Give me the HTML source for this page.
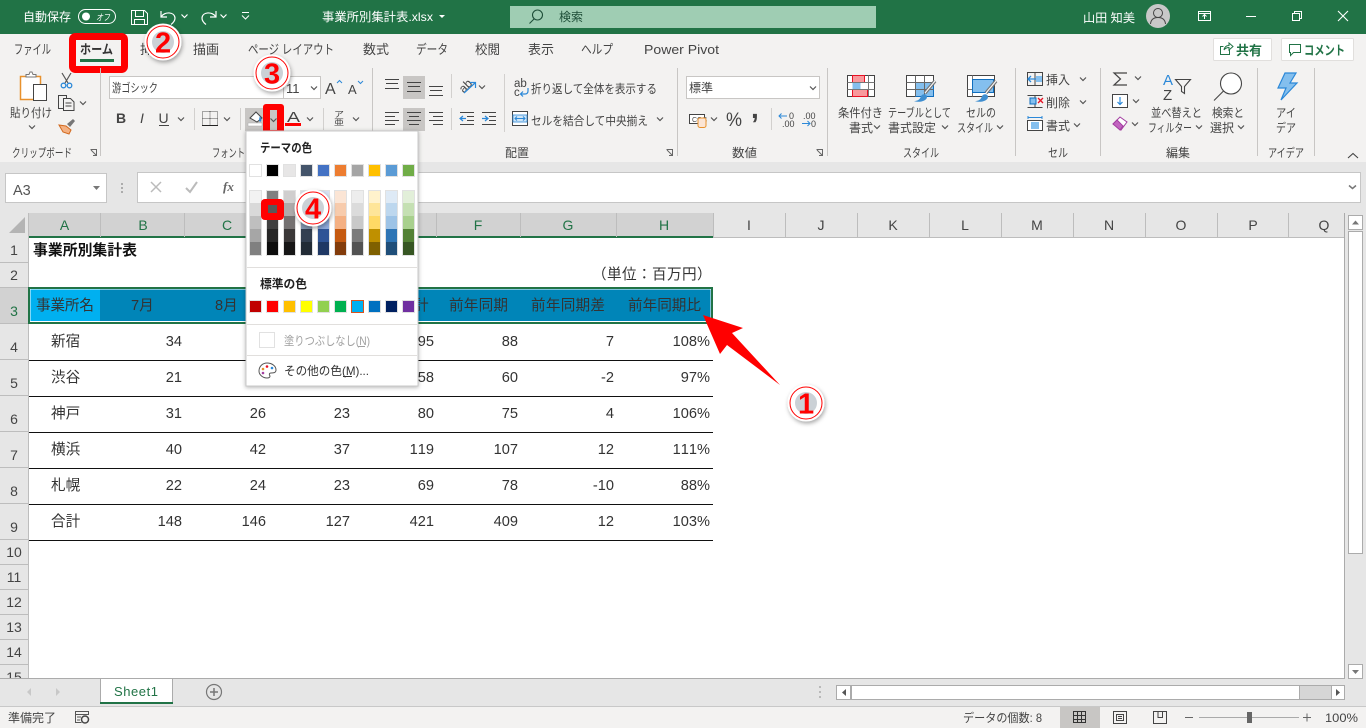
<!DOCTYPE html>
<html lang="ja"><head><meta charset="utf-8"><title>事業所別集計表.xlsx - Excel</title>
<style>
html,body{margin:0;padding:0;background:#fff;overflow:hidden}
svg{display:block}
text{font-family:"Liberation Sans","Noto Sans CJK JP",sans-serif;font-size:12px;fill:#444}
.w{fill:#fff}
.c{font-size:14.6px;fill:#333}
.hd{font-size:14px;fill:#444;text-anchor:middle}
.hs{font-size:14px;fill:#217346;text-anchor:middle}
.r{font-size:14.6px;fill:#333;text-anchor:end;font-kerning:none}
.n{font-family:"Liberation Sans",sans-serif;font-weight:bold;font-size:29px;fill:#f00;text-anchor:middle}
.tab{font-size:13px;fill:#444}
</style></head><body>
<svg width="1366" height="728" viewBox="0 0 1366 728" xmlns="http://www.w3.org/2000/svg">
<defs>
<path id="ch" d="M-3-1.5 0 1.5 3-1.5" fill="none" stroke="#555" stroke-width="1.2"/>
<path id="chw" d="M-3-1.5 0 1.5 3-1.5" fill="none" stroke="#fff" stroke-width="1.2"/>
<filter id="sh" x="-30%" y="-30%" width="160%" height="160%"><feDropShadow dx="1" dy="2" stdDeviation="2" flood-color="#000" flood-opacity=".35"/></filter>
<filter id="ms" x="-10%" y="-10%" width="120%" height="120%"><feDropShadow dx="0" dy="1" stdDeviation="2" flood-color="#000" flood-opacity=".3"/></filter>
<g id="badge"><circle r="18.5" fill="#fff" filter="url(#sh)"/><circle r="16" fill="#fff" stroke="#f00" stroke-width="1"/><circle r="11" fill="#a9b2ba" opacity=".6"/></g>
</defs>

<!-- base -->
<rect width="1366" height="728" fill="#e6e6e6"/>
<rect width="1366" height="34" fill="#217346"/>
<rect y="34" width="1366" height="128" fill="#f3f2f1"/>

<!-- title bar -->
<text class="w" x="23" y="21" textLength="48" lengthAdjust="spacingAndGlyphs">自動保存</text>
<rect x="78.500" y="9.500" width="37" height="14" rx="7" fill="none" stroke="#fff"/>
<circle cx="86" cy="16.500" r="4" fill="#fff"/>
<text class="w" x="96" y="20.500" style="font-size:9px;font-style:italic" textLength="14" lengthAdjust="spacingAndGlyphs">オフ</text>
<path d="M131.500 10.500h13l3 3v11h-16zM135.500 10.500v6h8v-6M134.500 24.500v-5h10v5" fill="none" stroke="#fff"/>
<path d="M161 11v6h6M161.500 16.500c3-5 13-5 13.500 1.500 0 3-2 5-4 6.500" fill="none" stroke="#fff" stroke-width="1.200"/>
<use href="#chw" x="184.500" y="16"/>
<path d="M216 11v6h-6M215.500 16.500c-3-5-13-5-13.500 1.500 0 3 2 5 4 6.500" fill="none" stroke="#fff" stroke-width="1.200"/>
<use href="#chw" x="223.500" y="16"/>
<path d="M242 12.500h7M242 15.500l3.500 3.500 3.500-3.500" fill="none" stroke="#fff"/>
<text class="w" x="322" y="21" textLength="111" lengthAdjust="spacingAndGlyphs">事業所別集計表.xlsx</text>
<path d="M439 15h6l-3 3z" fill="#fff"/>
<rect x="510" y="6" width="366" height="22" fill="#9fcdb3"/>
<circle cx="537.500" cy="15" r="5" fill="none" stroke="#1e4e38" stroke-width="1.100"/><path d="M534 19l-4.500 4.500" stroke="#1e4e38" stroke-width="1.100"/>
<text x="559" y="21" style="fill:#1e4e38" textLength="24" lengthAdjust="spacingAndGlyphs">検索</text>
<text class="w" x="1083" y="22" textLength="52" lengthAdjust="spacingAndGlyphs">山田 知美</text>
<circle cx="1158" cy="16" r="12" fill="#c8c8c8"/>
<circle cx="1158" cy="13" r="4.500" fill="none" stroke="#444"/><path d="M1150.500 24c.5-5 3.500-6.500 7.500-6.500s7 1.500 7.500 6.500" fill="none" stroke="#444"/>
<path d="M1198.500 11.500h12v9h-12zM1198.500 13.500h12M1204.500 19v-4M1202.500 16.500l2-2 2 2" fill="none" stroke="#fff"/>
<path d="M1246 16.500h10" stroke="#fff"/>
<path d="M1292.500 13.500h7v7h-7zM1294.500 13.500v-2h7v7h-2" fill="none" stroke="#fff"/>
<path d="M1338 11l10 10M1348 11l-10 10" stroke="#fff" stroke-width="1.100"/>

<!-- tabs -->
<text class="tab" x="14" y="54" textLength="37" lengthAdjust="spacingAndGlyphs">ファイル</text>
<text class="tab" x="140" y="54">挿入</text>
<text class="tab" x="193" y="54" textLength="26" lengthAdjust="spacingAndGlyphs">描画</text>
<text class="tab" x="248" y="54" textLength="86" lengthAdjust="spacingAndGlyphs">ページ レイアウト</text>
<text class="tab" x="363" y="54" textLength="26" lengthAdjust="spacingAndGlyphs">数式</text>
<text class="tab" x="416" y="54" textLength="32" lengthAdjust="spacingAndGlyphs">データ</text>
<text class="tab" x="475" y="54" textLength="25" lengthAdjust="spacingAndGlyphs">校閲</text>
<text class="tab" x="528" y="54" textLength="26" lengthAdjust="spacingAndGlyphs">表示</text>
<text class="tab" x="581" y="54" textLength="32" lengthAdjust="spacingAndGlyphs">ヘルプ</text>
<text class="tab" x="644" y="54" textLength="75" lengthAdjust="spacingAndGlyphs">Power Pivot</text>
<rect x="72.500" y="36.500" width="52" height="33" rx="3" fill="#f3f2f1" stroke="#f00" stroke-width="7"/>
<text class="tab" x="80" y="54" style="font-weight:bold;fill:#333" textLength="33" lengthAdjust="spacingAndGlyphs">ホーム</text>
<rect x="80" y="59" width="34" height="3" fill="#217346"/>

<!-- share / comment -->
<rect x="1213.500" y="38.500" width="58" height="22" rx="1" fill="#fff" stroke="#e1dfdd"/>
<path d="M1229.500 49.500v5h-9v-8h3M1224 50c.5-3 2.500-4.500 5-4.500V43l4 3.500-4 3.500v-2.500c-2 0-3.500.5-5 2.500z" fill="none" stroke="#217346"/>
<text x="1236" y="55" style="font-size:13px;font-weight:bold;fill:#217346">共有</text>
<rect x="1281.500" y="38.500" width="72" height="22" rx="1" fill="#fff" stroke="#e1dfdd"/>
<path d="M1289.500 44.500h11v8h-7l-3 3v-3h-1z" fill="none" stroke="#217346"/>
<text x="1304" y="55" style="font-size:13px;font-weight:bold;fill:#217346" textLength="41" lengthAdjust="spacingAndGlyphs">コメント</text>

<!-- ribbon group separators -->
<path d="M100.500 68v88M372.500 68v88M677.500 68v88M827.500 68v88M1015.500 68v88M1100.500 68v88M1257.500 68v88M1314.500 68v88" stroke="#c8c6c4"/>
<path d="M194.500 108v22M240.500 108v22M323.500 108v22M451.500 74v24M451.500 108v22M504.500 74v58M771.500 108v22" stroke="#d2d0ce"/>

<!-- clipboard -->
<rect x="20.500" y="76.500" width="20" height="23" fill="#fff" stroke="#e8912d" stroke-width="1.500"/>
<path d="M26 76.500v-2h3l1-2.500h2l1 2.500h3v2.500h-10z" fill="#fff" stroke="#777"/>
<rect x="33.500" y="84.500" width="13" height="16" fill="#fff" stroke="#444"/>
<text x="10" y="117" textLength="42" lengthAdjust="spacingAndGlyphs">貼り付け</text>
<use href="#ch" x="32" y="127"/>
<path d="M62 73l6 10M71 73l-6 10" stroke="#555" stroke-width="1.200"/><circle cx="63.500" cy="85.500" r="2.300" fill="none" stroke="#2b88d8" stroke-width="1.300"/><circle cx="69.500" cy="85.500" r="2.300" fill="none" stroke="#2b88d8" stroke-width="1.300"/>
<path d="M63 108.500h-4.500v-13h8v3M63.500 98.500h7l3.500 3.500v8.500h-10.500zM65.500 103h6M65.500 106h6" fill="none" stroke="#444"/>
<use href="#ch" x="83" y="103"/>
<path d="M59 125l7 1 5 4-2 4-6-2z" fill="#f4b183" stroke="#d2691e"/><path d="M67 124l6-5 2 2-5 6z" fill="#777"/>
<text x="12" y="157" textLength="60" lengthAdjust="spacingAndGlyphs">クリップボード</text>
<path d="M90.500 149.500h6v6M91 150l5 5M93 155.500h3.500v-3.500" fill="none" stroke="#666"/>

<!-- font -->
<rect x="109.500" y="76.500" width="174" height="22" fill="#fff" stroke="#c8c6c4"/>
<rect x="283.500" y="76.500" width="37" height="22" fill="#fff" stroke="#c8c6c4"/>
<text x="112" y="92" textLength="46" lengthAdjust="spacingAndGlyphs">游ゴシック</text>
<text x="286" y="93" style="font-size:13px">11</text>
<use href="#ch" x="314" y="88"/>
<text x="325" y="94" style="font-size:16px">A</text><path d="M337 83l2.500-2.500 2.500 2.500" fill="none" stroke="#2b88d8"/>
<text x="348" y="94" style="font-size:13px">A</text><path d="M358 81l2.500 2.500 2.500-2.500" fill="none" stroke="#2b88d8"/>
<text x="116" y="123" style="font-weight:bold;font-size:14px">B</text>
<text x="140" y="123" style="font-style:italic;font-size:14px">I</text>
<text x="158.500" y="123" style="font-size:14px">U</text><path d="M159 125.500h10" stroke="#444"/>
<use href="#ch" x="181" y="119"/>
<path d="M202.500 111.500h15v14h-15zM210 111.500v14M202.500 118.500h15" fill="none" stroke="#555" stroke-dasharray="1 1"/><path d="M202 125.500h16" stroke="#222"/>
<use href="#ch" x="227" y="119"/>
<rect x="245" y="108" width="18" height="23" fill="#c8c6c4"/>
<path d="M250 118l6-6 6 6-5 4z" fill="#fff" stroke="#444"/><path d="M260 116c1 2 2 3 1 5s-3 0-1-5z" fill="#2b88d8"/><rect x="248" y="123" width="14" height="3" fill="#fff" stroke="#aaa" stroke-width=".5"/>
<rect x="263" y="104" width="21" height="33" rx="3" fill="#f00"/>
<rect x="270" y="110" width="7" height="20" fill="#c8c6c4"/>
<use href="#ch" x="273.500" y="120"/>
<text x="287" y="122" style="font-size:15px" textLength="13" lengthAdjust="spacingAndGlyphs">A</text>
<rect x="285" y="123" width="16" height="3" fill="#f00"/>
<use href="#ch" x="310" y="119"/>
<text x="334" y="117" style="font-size:8px" textLength="10" lengthAdjust="spacingAndGlyphs">ア</text><text x="334" y="125" style="font-size:8px" textLength="10" lengthAdjust="spacingAndGlyphs">亜</text>
<use href="#ch" x="356" y="119"/>
<text x="212" y="157" textLength="33" lengthAdjust="spacingAndGlyphs">フォント</text>

<!-- alignment -->
<rect x="403" y="76" width="22" height="23" fill="#c8c6c4"/>
<rect x="403" y="108" width="22" height="23" fill="#c8c6c4"/>
<path d="M385 79.500h14M386 83.500h12M385 88.500h14M407 82.500h14M408 86.500h12M407 91.500h14M429 86.500h14M430 90.500h12M429 95.500h14" stroke="#444"/>
<path d="M385 112.500h14M385 116.500h10M385 120.500h14M385 124.500h10M407 112.500h14M409 116.500h10M407 120.500h14M409 124.500h10M429 112.500h14M433 116.500h10M429 120.500h14M433 124.500h10" stroke="#444"/>
<text x="458" y="90" transform="rotate(-45 465 85)" style="font-size:12px">ab</text>
<path d="M464 93l11-10M470 82.500h5.500v5.500" fill="none" stroke="#2b88d8" stroke-width="1.200"/>
<use href="#ch" x="482" y="87"/>
<path d="M460 112.500h14M467 116.500h7M467 120.500h7M460 124.500h14" stroke="#444"/>
<path d="M466 118.500h-6M463 116l-3 2.500 3 2.500" fill="none" stroke="#2b88d8" stroke-width="1.200"/>
<path d="M482 112.500h14M489 116.500h7M489 120.500h7M482 124.500h14" stroke="#444"/>
<path d="M482 118.500h6M485 116l3 2.500-3 2.500" fill="none" stroke="#2b88d8" stroke-width="1.200"/>
<text x="514" y="87" style="font-size:11.500px">ab</text><text x="514" y="96" style="font-size:11.500px">c</text>
<path d="M528 88v3c0 2-1 3-3 3h-4M523 91.500l-2.500 2.500 2.500 2.500" fill="none" stroke="#2b88d8" stroke-width="1.200"/>
<text x="531" y="93" textLength="126" lengthAdjust="spacingAndGlyphs">折り返して全体を表示する</text>
<rect x="512.500" y="111.500" width="15" height="14" fill="#fff" stroke="#444"/>
<rect x="513" y="115" width="14" height="7" fill="#cfe5f7" stroke="#2b88d8" stroke-width=".8"/>
<path d="M515 118.500h10M517 116.500l-2 2 2 2M523 116.500l2 2-2 2" fill="none" stroke="#2b88d8"/>
<text x="531" y="125" textLength="117" lengthAdjust="spacingAndGlyphs">セルを結合して中央揃え</text>
<use href="#ch" x="660" y="119"/>
<text x="505" y="157" textLength="24" lengthAdjust="spacingAndGlyphs">配置</text>
<path d="M666.500 149.500h6v6M667 150l5 5M669 155.500h3.500v-3.500" fill="none" stroke="#666"/>

<!-- number -->
<rect x="686.500" y="76.500" width="133" height="22" fill="#fff" stroke="#c8c6c4"/>
<text x="689" y="92">標準</text>
<use href="#ch" x="813" y="88"/>
<rect x="689.500" y="114.500" width="15" height="9" fill="#fff" stroke="#444"/>
<text x="692" y="122" style="font-size:7px">CCC</text>
<rect x="698" y="118" width="8" height="9.500" rx="2" fill="#fbe5d5" stroke="#e8912d"/>
<use href="#ch" x="714" y="119"/>
<text x="726" y="126" style="font-size:19px" textLength="16" lengthAdjust="spacingAndGlyphs">%</text>
<text x="751" y="118" style="font-size:28px;font-weight:bold">,</text>
<text x="789" y="119" style="font-size:9px">0</text><text x="782" y="127" style="font-size:9px">.00</text>
<path d="M787 116h-8M781.500 113.500l-2.500 2.500 2.500 2.500" fill="none" stroke="#2b88d8"/>
<text x="803" y="119" style="font-size:9px">.00</text><text x="811" y="127" style="font-size:9px">0</text>
<path d="M802 123.500h8M807.500 121l2.500 2.500-2.500 2.500" fill="none" stroke="#2b88d8"/>
<text x="732" y="157" textLength="25" lengthAdjust="spacingAndGlyphs">数値</text>
<path d="M816.500 149.500h6v6M817 150l5 5M819 155.500h3.500v-3.500" fill="none" stroke="#666"/>

<!-- styles -->
<rect x="847.500" y="75.500" width="27" height="21" fill="#fff" stroke="#444"/>
<rect x="852.500" y="75.500" width="12" height="7" fill="#f8999c" stroke="#e81123"/>
<rect x="852.500" y="82.500" width="8" height="7" fill="#84bfee"/>
<rect x="852.500" y="89.500" width="15" height="7" fill="#f8999c" stroke="#e81123"/>
<path d="M868.500 75.500v21M847.500 82.500h27M847.500 89.500h27" stroke="#777" fill="none"/>
<text x="838" y="117" textLength="45" lengthAdjust="spacingAndGlyphs">条件付き</text>
<text x="849" y="132" textLength="24">書式</text><use href="#ch" x="877" y="127"/>
<rect x="906.500" y="75.500" width="27" height="21" fill="#fff" stroke="#444"/>
<rect x="915.500" y="82.500" width="18" height="14" fill="#84bfee" stroke="#106ebe"/>
<path d="M915.500 75.500v21M924.500 75.500v21M906.500 82.500h27M906.500 89.500h27" stroke="#666" fill="none"/>
<path d="M925 93l10-12" stroke="#777" stroke-width="3.500"/><path d="M925 93l10-12" stroke="#fff" stroke-width="1"/>
<path d="M914 101c3 0 6-1 7-5 2-3 6-2 6 1 0 4-8 6-13 4z" fill="#3e8ed0"/>
<text x="888" y="117" textLength="63" lengthAdjust="spacingAndGlyphs">テーブルとして</text>
<text x="888" y="132" textLength="48" lengthAdjust="spacingAndGlyphs">書式設定</text><use href="#ch" x="945" y="127"/>
<rect x="967.500" y="75.500" width="27" height="21" fill="#fff" stroke="#444"/>
<path d="M972.500 75.500v21M967.500 89.500h5" stroke="#777" fill="none"/>
<rect x="972.500" y="79.500" width="21" height="13" fill="#84bfee" stroke="#106ebe"/>
<path d="M986 93l10-12" stroke="#777" stroke-width="3.500"/><path d="M986 93l10-12" stroke="#fff" stroke-width="1"/>
<path d="M975 101c3 0 6-1 7-5 2-3 6-2 6 1 0 4-8 6-13 4z" fill="#3e8ed0"/>
<text x="966" y="117" textLength="30" lengthAdjust="spacingAndGlyphs">セルの</text>
<text x="957" y="132" textLength="36" lengthAdjust="spacingAndGlyphs">スタイル</text><use href="#ch" x="1000" y="127"/>
<text x="903" y="157" textLength="36" lengthAdjust="spacingAndGlyphs">スタイル</text>

<!-- cells -->
<path d="M1027.500 72.500h15v13h-15zM1027.500 79h15M1035 72.500v13" fill="none" stroke="#444"/><rect x="1036" y="76" width="6" height="6" fill="#84bfee"/>
<path d="M1036 79h-8M1031 76l-3 3 3 3" fill="none" stroke="#2b88d8" stroke-width="1.300"/>
<text x="1046" y="84" textLength="24" lengthAdjust="spacingAndGlyphs">挿入</text><use href="#ch" x="1083" y="79"/>
<path d="M1027.500 95.500h15M1027.500 107.500h15M1035 95.500v12" fill="none" stroke="#444"/><rect x="1030" y="98" width="6" height="6" fill="#84bfee" stroke="#106ebe"/>
<path d="M1038 98l5 5M1043 98l-5 5" stroke="#e81123" stroke-width="1.300"/>
<text x="1046" y="107" textLength="24" lengthAdjust="spacingAndGlyphs">削除</text><use href="#ch" x="1083" y="102"/>
<path d="M1028 117.500h14M1028 116v3M1042 116v3" stroke="#2b88d8" fill="none"/>
<rect x="1027.500" y="120.500" width="15" height="10" fill="#fff" stroke="#444"/><rect x="1031" y="122" width="8" height="7" fill="#84bfee"/>
<text x="1046" y="130" textLength="24" lengthAdjust="spacingAndGlyphs">書式</text><use href="#ch" x="1077" y="125"/>
<text x="1048" y="157" textLength="20" lengthAdjust="spacingAndGlyphs">セル</text>

<!-- editing -->
<path d="M1127 73h-13l6.500 6-6.500 6h13" fill="none" stroke="#444" stroke-width="1.200"/>
<use href="#ch" x="1138" y="78"/>
<rect x="1112.500" y="94.500" width="15" height="13" fill="#fff" stroke="#444"/><path d="M1120 97v7M1117.500 102l2.500 2.500 2.500-2.500" fill="none" stroke="#2b88d8" stroke-width="1.200"/>
<use href="#ch" x="1136" y="101"/>
<path d="M1113 124l7-7 7 5-6 8z" fill="#fff" stroke="#a33ea1"/><path d="M1113 124l4-4 6 6-3 4z" fill="#c264c0" stroke="#a33ea1"/>
<use href="#ch" x="1135" y="124"/>
<text x="1163" y="85" style="font-size:15px;fill:#2b88d8">A</text><text x="1163" y="100" style="font-size:15px">Z</text>
<path d="M1175.500 79.500h15l-6 7v7l-3-2v-5z" fill="none" stroke="#444" stroke-width="1.100"/>
<text x="1151" y="117" textLength="51" lengthAdjust="spacingAndGlyphs">並べ替えと</text>
<text x="1148" y="132" textLength="44" lengthAdjust="spacingAndGlyphs">フィルター</text><use href="#ch" x="1199" y="127"/>
<circle cx="1231" cy="83.500" r="10.500" fill="#fff" stroke="#444" stroke-width="1.100"/><path d="M1223.500 91l-9.500 9.500" stroke="#444" stroke-width="1.100"/>
<text x="1212" y="117" textLength="32" lengthAdjust="spacingAndGlyphs">検索と</text>
<text x="1210" y="132" textLength="24">選択</text><use href="#ch" x="1241" y="127"/>
<text x="1166" y="157">編集</text>

<!-- ideas -->
<path d="M1285 73h11l-6 10h7l-16 17 5-12h-8z" fill="#84bfee" stroke="#2b88d8" stroke-width="1.200"/>
<text x="1276" y="117" textLength="20" lengthAdjust="spacingAndGlyphs">アイ</text>
<text x="1276" y="132" textLength="20" lengthAdjust="spacingAndGlyphs">デア</text>
<text x="1268" y="157" textLength="36" lengthAdjust="spacingAndGlyphs">アイデア</text>
<path d="M1348 158l5-4.500 5 4.500" fill="none" stroke="#444" stroke-width="1.100"/>

<!-- formula bar -->
<rect x="5.500" y="173.500" width="101" height="29" fill="#fff" stroke="#c6c6c6"/>
<text x="13" y="195" style="font-size:14.500px;fill:#555">A3</text>
<path d="M93 186h7l-3.500 4z" fill="#777"/>
<path d="M122 183v2M122 187v2M122 191v2" stroke="#999" stroke-width="1.500"/>
<rect x="137.500" y="172.500" width="1223" height="30" fill="#fff" stroke="#c6c6c6"/>
<path d="M151 182l10 10M161 182l-10 10" stroke="#bbb" stroke-width="1.500"/>
<path d="M186 188l4 4 7-10" fill="none" stroke="#bbb" stroke-width="2"/>
<text x="223" y="191" style="font-family:'Liberation Serif',serif;font-style:italic;font-weight:bold;font-size:13px;fill:#666">fx</text>
<path d="M1349 185.500l3.500 3 3.500-3" fill="none" stroke="#777" stroke-width="1.500"/>

<!-- grid -->
<rect x="28" y="238" width="1317" height="440" fill="#fff"/>
<!-- column header -->
<rect x="0" y="213" width="1345" height="25" fill="#e6e6e6"/>
<rect x="28" y="213" width="685" height="24" fill="#d2d2d2"/>
<rect x="28" y="236" width="685" height="2" fill="#217346"/>
<path d="M28.500 213v25M100.500 213v24M184.500 213v24M268.500 213v24M352.500 213v24M436.500 213v24M520.500 213v24M616.500 213v24M713.500 213v24M785.500 213v24M857.500 213v24M929.500 213v24M1001.500 213v24M1073.500 213v24M1145.500 213v24M1217.500 213v24M1288.500 213v24" stroke="#bdbdbd"/>
<path d="M713 237.500h632" stroke="#bdbdbd"/>
<path d="M25 217v16H9z" fill="#b4b4b4"/>
<text class="hs" x="64.500" y="230">A</text><text class="hs" x="143" y="230">B</text><text class="hs" x="227" y="230">C</text><text class="hs" x="478" y="230">F</text><text class="hs" x="568" y="230">G</text><text class="hs" x="664" y="230">H</text>
<text class="hd" x="749" y="230">I</text><text class="hd" x="821" y="230">J</text><text class="hd" x="893" y="230">K</text><text class="hd" x="965" y="230">L</text><text class="hd" x="1037" y="230">M</text><text class="hd" x="1109" y="230">N</text><text class="hd" x="1181" y="230">O</text><text class="hd" x="1253" y="230">P</text><text class="hd" x="1324" y="230">Q</text>
<!-- row header -->
<rect x="0" y="238" width="28" height="440" fill="#e6e6e6"/>
<rect x="0" y="287" width="28" height="37" fill="#d2d2d2"/>
<path d="M0 262.500h28M0 287.500h28M0 323.500h28M0 359.500h28M0 395.500h28M0 431.500h28M0 467.500h28M0 503.500h28M0 539.500h28M0 564.500h28M0 589.500h28M0 614.500h28M0 639.500h28M0 664.500h28M28.500 238v440" stroke="#bdbdbd"/>
<text class="hd" x="14" y="255">1</text><text class="hd" x="14" y="280">2</text><text class="hs" x="14" y="316">3</text><text class="hd" x="14" y="352">4</text><text class="hd" x="14" y="388">5</text><text class="hd" x="14" y="424">6</text><text class="hd" x="14" y="460">7</text><text class="hd" x="14" y="496">8</text><text class="hd" x="14" y="532">9</text><text class="hd" x="14" y="557">10</text><text class="hd" x="14" y="582">11</text><text class="hd" x="14" y="607">12</text><text class="hd" x="14" y="632">13</text><text class="hd" x="14" y="657">14</text><text class="hd" x="14" y="682">15</text>
<rect x="0" y="678" width="1345" height="1" fill="#ababab"/>
<path d="M1344.500 213v465" stroke="#ababab"/>

<!-- table -->
<text x="33" y="255" style="font-size:14.800px;font-weight:bold;fill:#111" textLength="104" lengthAdjust="spacingAndGlyphs">事業所別集計表</text>
<text x="592 607 622 637 652 667 682 697" y="279" class="c">（単位：百万円）</text>
<rect x="29" y="288" width="683" height="35" fill="#fff" stroke="#217346" stroke-width="2"/>
<rect x="30.500" y="289.500" width="680" height="31.500" fill="#0085b8"/>
<rect x="30.500" y="289.500" width="69.500" height="31.500" fill="#00b0f0"/>
<text class="c" x="36" y="310" textLength="58">事業所名</text>
<text class="c" x="131" y="310">7月</text>
<text class="c" x="215" y="310">8月</text>
<text class="c" x="414" y="310">計</text>
<text class="c" x="449" y="310" textLength="59">前年同期</text>
<text class="c" x="531" y="310" textLength="74">前年同期差</text>
<text class="c" x="628" y="310" textLength="73">前年同期比</text>
<path d="M29 360.500h684M29 396.500h684M29 432.500h684M29 468.500h684M29 504.500h684M29 540.500h684" stroke="#111"/>
<text class="c" x="51" y="346">新宿</text><text class="r" x="182" y="346">34</text><text class="r" x="434" y="346">95</text><text class="r" x="518" y="346">88</text><text class="r" x="614" y="346">7</text><text class="r" x="710" y="346">108%</text>
<text class="c" x="51" y="382">渋谷</text><text class="r" x="182" y="382">21</text><text class="r" x="434" y="382">58</text><text class="r" x="518" y="382">60</text><text class="r" x="614" y="382">-2</text><text class="r" x="710" y="382">97%</text>
<text class="c" x="51" y="418">神戸</text><text class="r" x="182" y="418">31</text><text class="r" x="266" y="418">26</text><text class="r" x="350" y="418">23</text><text class="r" x="434" y="418">80</text><text class="r" x="518" y="418">75</text><text class="r" x="614" y="418">4</text><text class="r" x="710" y="418">106%</text>
<text class="c" x="51" y="454">横浜</text><text class="r" x="182" y="454">40</text><text class="r" x="266" y="454">42</text><text class="r" x="350" y="454">37</text><text class="r" x="434" y="454">119</text><text class="r" x="518" y="454">107</text><text class="r" x="614" y="454">12</text><text class="r" x="710" y="454">111%</text>
<text class="c" x="51" y="490">札幌</text><text class="r" x="182" y="490">22</text><text class="r" x="266" y="490">24</text><text class="r" x="350" y="490">23</text><text class="r" x="434" y="490">69</text><text class="r" x="518" y="490">78</text><text class="r" x="614" y="490">-10</text><text class="r" x="710" y="490">88%</text>
<text class="c" x="51" y="526">合計</text><text class="r" x="182" y="526">148</text><text class="r" x="266" y="526">146</text><text class="r" x="350" y="526">127</text><text class="r" x="434" y="526">421</text><text class="r" x="518" y="526">409</text><text class="r" x="614" y="526">12</text><text class="r" x="710" y="526">103%</text>

<!-- vertical scrollbar -->
<rect x="1345" y="213" width="21" height="465" fill="#e6e6e6"/>
<rect x="1348.500" y="215.500" width="14" height="14" fill="#fff" stroke="#ababab"/><path d="M1352 224.500h7l-3.500-4z" fill="#777"/>
<rect x="1348.500" y="231.500" width="14" height="322" fill="#fff" stroke="#ababab"/>
<rect x="1348.500" y="664.500" width="14" height="14" fill="#fff" stroke="#ababab"/><path d="M1352 670h7l-3.500 4z" fill="#777"/>

<!-- sheet tabs -->
<rect x="0" y="679" width="1366" height="27" fill="#e6e6e6"/>
<path d="M31 688v8l-4-4zM56 688v8l4-4z" fill="#c8c8c8"/>
<rect x="100.500" y="678.500" width="72" height="25" fill="#fff" stroke="#ababab"/>
<rect x="100" y="702" width="73" height="2" fill="#217346"/>
<text x="114" y="696" style="font-size:13px;fill:#217346" textLength="44">Sheet1</text>
<circle cx="214" cy="692" r="7.500" fill="none" stroke="#777" stroke-width="1.200"/><path d="M210 692h8M214 688v8" stroke="#777" stroke-width="1.500"/>
<path d="M820 686v2M820 691v2M820 696v2" stroke="#aaa" stroke-width="1.500"/>
<rect x="836.500" y="685.500" width="507" height="14" fill="#d6d6d6" stroke="#ababab"/>
<rect x="836.500" y="685.500" width="14" height="14" fill="#fff" stroke="#ababab"/><path d="M846 689v7l-4-3.500z" fill="#555"/>
<rect x="851.500" y="685.500" width="448" height="14" fill="#fff" stroke="#ababab"/>
<rect x="1331.500" y="685.500" width="13" height="14" fill="#fff" stroke="#ababab"/><path d="M1336 689v7l4-3.500z" fill="#555"/>

<!-- status bar -->
<rect x="0" y="706" width="1366" height="22" fill="#f3f2f1"/>
<rect x="0" y="706" width="1366" height="1" fill="#c8c8c8"/>
<text x="8" y="722" textLength="48" lengthAdjust="spacingAndGlyphs">準備完了</text>
<path d="M75.500 711.500h13v3h-13zM75.500 714.500v8h6M77 717h4M77 720h3" fill="none" stroke="#555"/><circle cx="85" cy="719.500" r="3.500" fill="none" stroke="#444" stroke-width="1.500"/>
<text x="963" y="722" textLength="79" lengthAdjust="spacingAndGlyphs">データの個数: 8</text>
<rect x="1060" y="707" width="40" height="21" fill="#c8c6c4"/>
<path d="M1073.500 711.500h12v11h-12zM1077.500 711.500v11M1081.500 711.500v11M1073.500 715.500h12M1073.500 719.500h12" fill="none" stroke="#333"/>
<path d="M1113.500 711.500h13v12h-13zM1116.500 714.500h7v6h-7zM1118 716.500h4M1118 718.500h4" fill="none" stroke="#444"/>
<path d="M1153.500 711.500h13v12h-13zM1158 711.500v6h4.500v-6" fill="none" stroke="#444"/>
<path d="M1185 717.500h8M1303 717.500h8M1307 713.500v8" stroke="#666"/>
<path d="M1199 717.500h100" stroke="#aaa"/>
<rect x="1247" y="712" width="5" height="11" fill="#666"/>
<text x="1325" y="722" textLength="33" lengthAdjust="spacingAndGlyphs">100%</text>

<!-- color popup -->
<rect x="246" y="131" width="172" height="255" fill="#fff" stroke="#c8c8c8" filter="url(#ms)"/>
<text x="260" y="152" style="font-weight:bold;fill:#222" textLength="52" lengthAdjust="spacingAndGlyphs">テーマの色</text>
<g stroke="#e1e1e1">
<rect x="249.500" y="164.500" width="12" height="12" fill="#fff"/><rect x="266.500" y="164.500" width="12" height="12" fill="#000"/><rect x="283.500" y="164.500" width="12" height="12" fill="#e7e6e6"/><rect x="300.500" y="164.500" width="12" height="12" fill="#44546a"/><rect x="317.500" y="164.500" width="12" height="12" fill="#4472c4"/><rect x="334.500" y="164.500" width="12" height="12" fill="#ed7d31"/><rect x="351.500" y="164.500" width="12" height="12" fill="#a5a5a5"/><rect x="368.500" y="164.500" width="12" height="12" fill="#ffc000"/><rect x="385.500" y="164.500" width="12" height="12" fill="#5b9bd5"/><rect x="402.500" y="164.500" width="12" height="12" fill="#70ad47"/>
</g>
<g>
<rect x="250" y="190" width="12" height="13" fill="#f2f2f2"/><rect x="250" y="203" width="12" height="13" fill="#d9d9d9"/><rect x="250" y="216" width="12" height="13" fill="#bfbfbf"/><rect x="250" y="229" width="12" height="13" fill="#a6a6a6"/><rect x="250" y="242" width="12" height="13" fill="#808080"/>
<rect x="267" y="190" width="12" height="13" fill="#808080"/><rect x="267" y="203" width="12" height="13" fill="#595959"/><rect x="267" y="216" width="12" height="13" fill="#404040"/><rect x="267" y="229" width="12" height="13" fill="#262626"/><rect x="267" y="242" width="12" height="13" fill="#0d0d0d"/>
<rect x="284" y="190" width="12" height="13" fill="#d0cece"/><rect x="284" y="203" width="12" height="13" fill="#aeaaaa"/><rect x="284" y="216" width="12" height="13" fill="#757171"/><rect x="284" y="229" width="12" height="13" fill="#3b3838"/><rect x="284" y="242" width="12" height="13" fill="#171616"/>
<rect x="301" y="190" width="12" height="13" fill="#d6dce5"/><rect x="301" y="203" width="12" height="13" fill="#adb9ca"/><rect x="301" y="216" width="12" height="13" fill="#8497b0"/><rect x="301" y="229" width="12" height="13" fill="#333f50"/><rect x="301" y="242" width="12" height="13" fill="#222b35"/>
<rect x="318" y="190" width="12" height="13" fill="#d9e2f3"/><rect x="318" y="203" width="12" height="13" fill="#b4c6e7"/><rect x="318" y="216" width="12" height="13" fill="#8eaadb"/><rect x="318" y="229" width="12" height="13" fill="#2f5496"/><rect x="318" y="242" width="12" height="13" fill="#1f3864"/>
<rect x="335" y="190" width="12" height="13" fill="#fbe5d5"/><rect x="335" y="203" width="12" height="13" fill="#f7cbac"/><rect x="335" y="216" width="12" height="13" fill="#f4b083"/><rect x="335" y="229" width="12" height="13" fill="#c55a11"/><rect x="335" y="242" width="12" height="13" fill="#833c0b"/>
<rect x="352" y="190" width="12" height="13" fill="#ededed"/><rect x="352" y="203" width="12" height="13" fill="#dbdbdb"/><rect x="352" y="216" width="12" height="13" fill="#c9c9c9"/><rect x="352" y="229" width="12" height="13" fill="#7b7b7b"/><rect x="352" y="242" width="12" height="13" fill="#525252"/>
<rect x="369" y="190" width="12" height="13" fill="#fff2cc"/><rect x="369" y="203" width="12" height="13" fill="#fee599"/><rect x="369" y="216" width="12" height="13" fill="#ffd965"/><rect x="369" y="229" width="12" height="13" fill="#bf9000"/><rect x="369" y="242" width="12" height="13" fill="#7f6000"/>
<rect x="386" y="190" width="12" height="13" fill="#deeaf6"/><rect x="386" y="203" width="12" height="13" fill="#bdd7ee"/><rect x="386" y="216" width="12" height="13" fill="#9dc3e6"/><rect x="386" y="229" width="12" height="13" fill="#2e75b5"/><rect x="386" y="242" width="12" height="13" fill="#1f4e79"/>
<rect x="403" y="190" width="12" height="13" fill="#e2efd9"/><rect x="403" y="203" width="12" height="13" fill="#c5e0b3"/><rect x="403" y="216" width="12" height="13" fill="#a8d08d"/><rect x="403" y="229" width="12" height="13" fill="#538135"/><rect x="403" y="242" width="12" height="13" fill="#375623"/>
</g>
<g fill="none" stroke="#e1e1e1"><rect x="249.500" y="190.500" width="12" height="65"/><rect x="266.500" y="190.500" width="12" height="65"/><rect x="283.500" y="190.500" width="12" height="65"/><rect x="300.500" y="190.500" width="12" height="65"/><rect x="317.500" y="190.500" width="12" height="65"/><rect x="334.500" y="190.500" width="12" height="65"/><rect x="351.500" y="190.500" width="12" height="65"/><rect x="368.500" y="190.500" width="12" height="65"/><rect x="385.500" y="190.500" width="12" height="65"/><rect x="402.500" y="190.500" width="12" height="65"/></g>
<path d="M247 267.500h170M247 324.500h170M247 355.500h170" stroke="#e1dfdd"/>
<text x="260" y="288" style="font-weight:bold;fill:#222" textLength="47" lengthAdjust="spacingAndGlyphs">標準の色</text>
<g stroke="#e1e1e1">
<rect x="249.500" y="300.500" width="12" height="12" fill="#c00000"/><rect x="266.500" y="300.500" width="12" height="12" fill="#f00"/><rect x="283.500" y="300.500" width="12" height="12" fill="#ffc000"/><rect x="300.500" y="300.500" width="12" height="12" fill="#ff0"/><rect x="317.500" y="300.500" width="12" height="12" fill="#92d050"/><rect x="334.500" y="300.500" width="12" height="12" fill="#00b050"/><rect x="368.500" y="300.500" width="12" height="12" fill="#0070c0"/><rect x="385.500" y="300.500" width="12" height="12" fill="#002060"/><rect x="402.500" y="300.500" width="12" height="12" fill="#7030a0"/>
</g>
<rect x="351.500" y="300.500" width="12" height="12" fill="#00b0f0" stroke="#d9531e"/>
<rect x="259.500" y="332.500" width="15" height="15" fill="#fff" stroke="#e1e1e1"/>
<text x="284" y="345" style="fill:#a0a0a0" textLength="86" lengthAdjust="spacingAndGlyphs">塗りつぶしなし(N)</text>
<path d="M358 346.500h7" stroke="#a0a0a0"/>
<path d="M267 363c5 0 9 3 9 7 0 3-3 3-5 3s-2 2-1 3c0 2-2 2-3 2-4 0-8-3-8-7 0-5 4-8 8-8z" fill="#fff" stroke="#555"/>
<circle cx="263" cy="369" r="1.300" fill="#e8912d"/><circle cx="267" cy="366.500" r="1.300" fill="#e81123"/><circle cx="272" cy="368" r="1.300" fill="#2b88d8"/><circle cx="263" cy="373" r="1.300" fill="#a33ea1"/>
<text x="284" y="375" style="fill:#333" textLength="85" lengthAdjust="spacingAndGlyphs">その他の色(M)...</text>
<path d="M343 376.500h9" stroke="#333"/>

<!-- step 4 highlight -->
<rect x="261" y="199" width="23" height="21" rx="4" fill="#f00"/>
<rect x="268" y="205" width="9" height="8" fill="#595959"/>

<!-- arrow -->
<path d="M703 315L743 328 732 333 780 385 727 345 720 354z" fill="#f00"/>

<!-- badges -->
<g transform="translate(806 403)"><use href="#badge"/><text class="n" y="10.500">1</text></g>
<g transform="translate(163 42)"><use href="#badge"/><text class="n" y="10.500">2</text></g>
<g transform="translate(272 73)"><use href="#badge"/><text class="n" y="10.500">3</text></g>
<g transform="translate(313 208)"><use href="#badge"/><text class="n" y="10.500">4</text></g>
</svg>
</body></html>
